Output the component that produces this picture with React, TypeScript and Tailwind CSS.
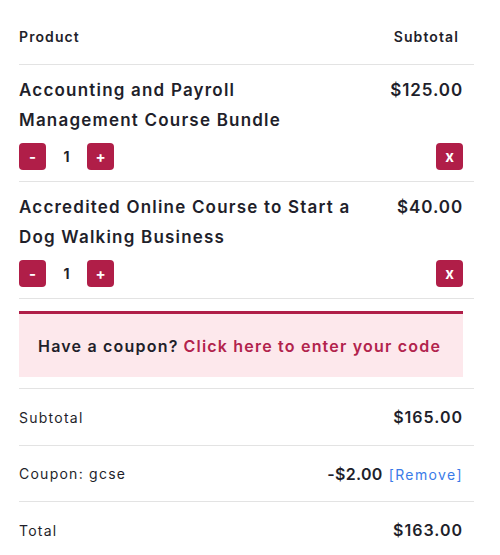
import React from "react";

const items = [
  { name: "Accounting and Payroll Management Course Bundle", price: "$125.00", qty: 1 },
  { name: "Accredited Online Course to Start a Dog Walking Business", price: "$40.00", qty: 1 },
];

function SquareButton({ label }: { label: string }) {
  return (
    <button className="flex h-[27px] w-[27px] items-center justify-center rounded-[4px] bg-[#b01e48] text-[15px] font-bold leading-none text-white">
      {label}
    </button>
  );
}

export default function App() {
  return (
    <div className="min-h-[555px] bg-white font-['Inter','Noto_Sans',sans-serif] text-[#1f1f2b]">
      <div className="ml-[19px] w-[455px]">
        {/* header */}
        <div className="flex h-[65px] items-end justify-between border-b border-[#e3e3e3] pb-[17px] pr-[15px] text-[14px] font-semibold tracking-[1.1px]">
          <span>Product</span>
          <span>Subtotal</span>
        </div>

        {items.map((item) => (
          <div key={item.name} className="border-b border-[#e3e3e3] pb-[11px] pr-[11px] pt-[10px]">
            <div className="flex justify-between">
              <div className="w-[336px] text-[17px] font-semibold leading-[30px] tracking-[1.2px]">{item.name}</div>
              <div className="text-[17px] font-semibold leading-[30px] tracking-[0.9px]">{item.price}</div>
            </div>
            <div className="mt-[8px] flex items-center justify-between">
              <div className="flex items-center">
                <SquareButton label="-" />
                <span className="w-[41px] text-center text-[14px] font-bold">{item.qty}</span>
                <SquareButton label="+" />
              </div>
              <SquareButton label="x" />
            </div>
          </div>
        ))}

        {/* coupon notice */}
        <div className="pb-[11px] pt-[12px] pr-[11px]">
          <div className="flex h-[66px] items-center border-t-[3px] border-[#b01e48] bg-[#fde8ec] pl-[19px] text-[16px] font-semibold tracking-[1.2px]">
            <span>Have a coupon?</span>
            <span className="ml-[5px] text-[#b2234d]">Click here to enter your code</span>
          </div>
        </div>

        {/* totals */}
        <div className="border-t border-[#e3e3e3]">
          <div className="flex h-[57px] items-center justify-between border-b border-[#e3e3e3] pr-[11px]">
            <span className="text-[14px] tracking-[1.25px]">Subtotal</span>
            <span className="text-[16px] font-semibold tracking-[1px]">$165.00</span>
          </div>
          <div className="flex h-[56px] items-center justify-between border-b border-[#e3e3e3] pr-[11px]">
            <span className="text-[14px] tracking-[1.25px]">Coupon: gcse</span>
            <span className="flex items-baseline">
              <span className="text-[16px] font-semibold tracking-[0.3px]">-$2.00</span>
              <span className="ml-[6px] text-[14px] tracking-[1.4px] text-[#3a7be8]">[Remove]</span>
            </span>
          </div>
          <div className="flex h-[56px] items-center justify-between pr-[11px]">
            <span className="text-[14px] tracking-[1.25px]">Total</span>
            <span className="text-[16px] font-semibold tracking-[1px]">$163.00</span>
          </div>
        </div>
      </div>
    </div>
  );
}
